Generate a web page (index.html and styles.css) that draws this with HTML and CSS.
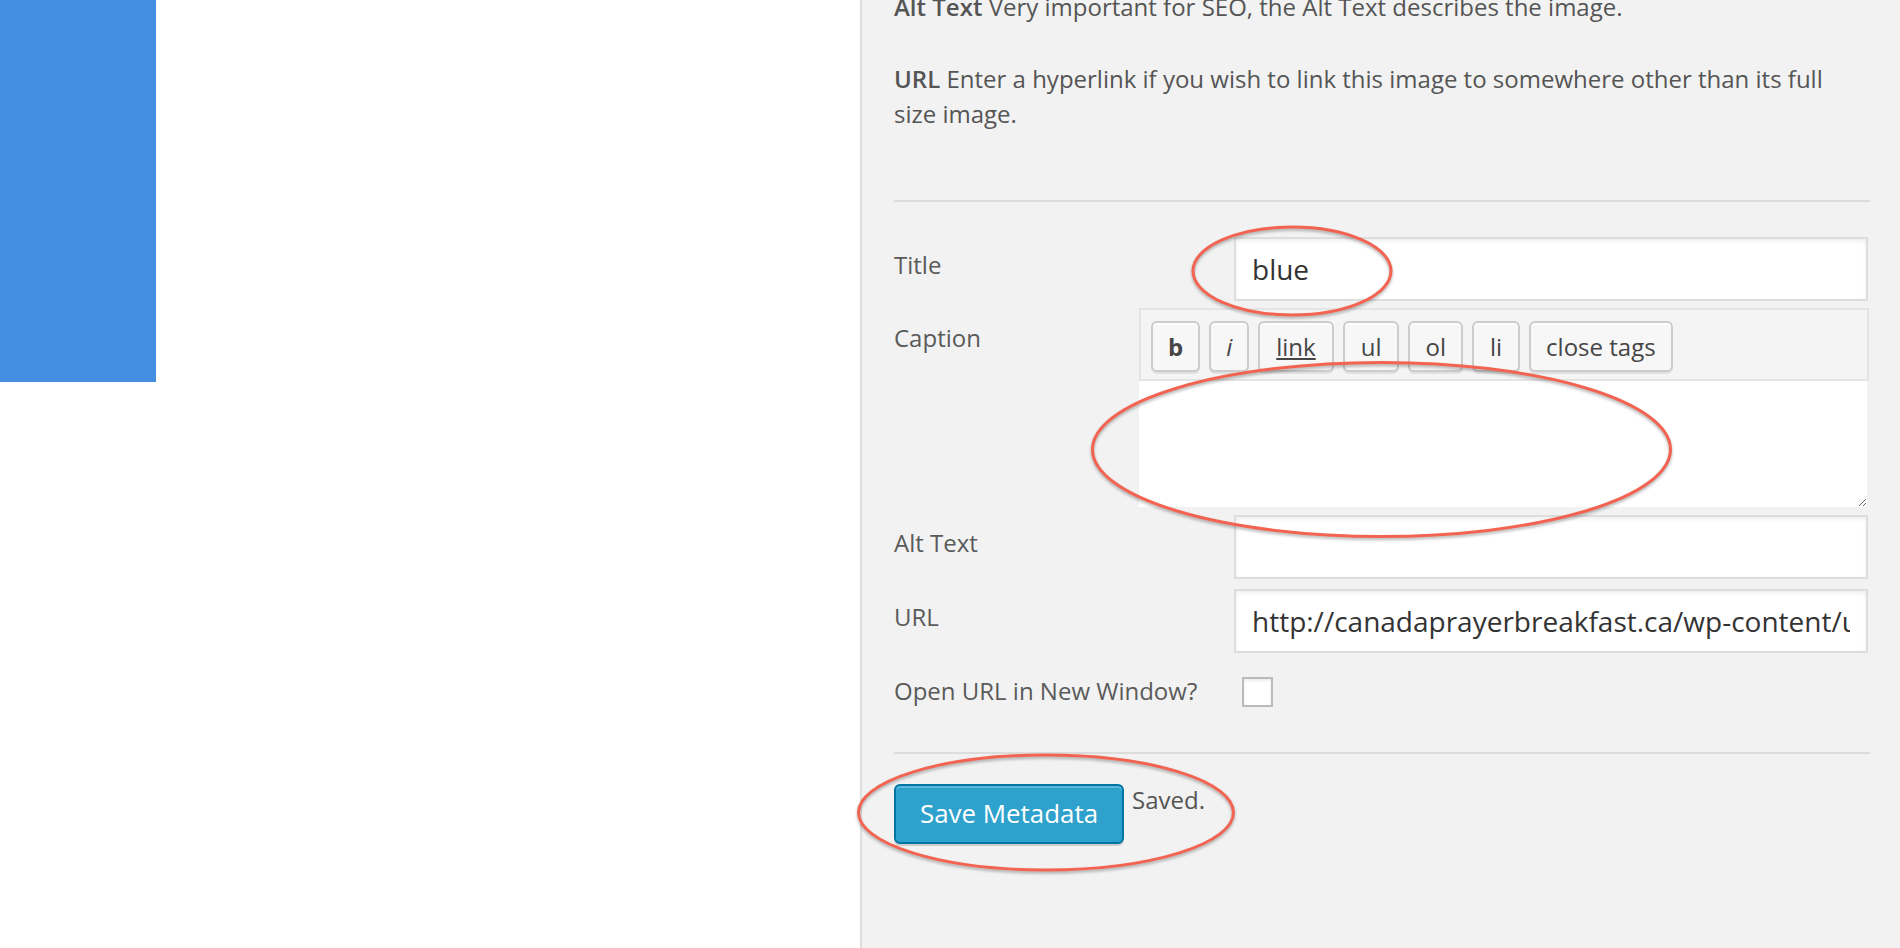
FILE: index.html
```html
<!DOCTYPE html>
<html>
<head>
<meta charset="utf-8">
<link rel="stylesheet" href="styles.css">
</head>
<body>
<div class="page">
  <div class="preview">
    <div class="swatch"></div>
  </div>
  <div class="panel">
    <p class="help first"><strong>Alt Text</strong> Very important for SEO, the Alt Text describes the image.</p>
    <p class="help"><strong>URL</strong> Enter a hyperlink if you wish to link this image to somewhere other than its full size image.</p>
    <div class="rule rule-top"></div>

    <div class="row row-title">
      <label class="lbl">Title</label>
      <input class="field" type="text" value="blue">
    </div>

    <div class="row row-caption">
      <label class="lbl lbl-caption">Caption</label>
      <div class="editor">
        <div class="toolbar">
          <span class="qt qt-b">b</span>
          <span class="qt qt-i">i</span>
          <span class="qt qt-link">link</span>
          <span class="qt">ul</span>
          <span class="qt qt-ol">ol</span>
          <span class="qt qt-li">li</span>
          <span class="qt qt-close">close tags</span>
        </div>
        <textarea class="caption-area"></textarea>
      </div>
    </div>

    <div class="row row-alt">
      <label class="lbl">Alt Text</label>
      <input class="field" type="text" value="">
    </div>

    <div class="row row-url">
      <label class="lbl">URL</label>
      <input class="field" type="text" value="http://canadaprayerbreakfast.ca/wp-content/uploads/2014/blue.png">
    </div>

    <div class="row row-open">
      <label class="lbl lbl-open">Open URL in New Window?</label>
      <input class="check" type="checkbox">
    </div>

    <div class="rule rule-bottom"></div>

    <div class="actions">
      <button class="save">Save Metadata</button>
      <span class="saved">Saved.</span>
    </div>
  </div>
</div>

<svg class="marks" width="1900" height="948" viewBox="0 0 1900 948">
  <ellipse cx="1292" cy="271" rx="99" ry="44"></ellipse>
  <ellipse cx="1381.5" cy="449.5" rx="289" ry="87"></ellipse>
  <ellipse cx="1046" cy="812.5" rx="187.5" ry="57.5"></ellipse>
</svg>
</body>
</html>
```

FILE: styles.css
```css
html, body {
  margin: 0;
  padding: 0;
  height: 100%;
  overflow: hidden;
  background: #ffffff;
}

body {
  font-family: "Open Sans", "Liberation Sans", sans-serif;
  position: relative;
}

.page {
  display: flex;
  height: 948px;
}

.preview {
  width: 860px;
  flex: none;
  background: #ffffff;
}

.swatch {
  width: 156px;
  height: 382px;
  background: #448ee2;
}

.panel {
  flex: 1;
  border-left: 2px solid #dedede;
  background: #f2f2f2;
  padding: 0 30px 0 32px;
  color: #555555;
  font-size: 24px;
  line-height: 35px;
}

.help {
  margin: 0 0 37px 0;
}

.help.first {
  margin-top: -11px;
}

.help strong {
  font-weight: 600;
}

.rule {
  height: 2px;
  background: #dcdcdc;
}

.rule-top {
  margin-top: 69px;
}

.row {
  display: flex;
  align-items: flex-start;
}

.lbl {
  width: 245px;
  flex: none;
  padding-top: 10px;
  color: #5a5a5a;
  white-space: nowrap;
}

.lbl-caption {
  padding-top: 12px;
}

.lbl-open {
  padding-top: 0;
}

.row-title {
  margin-top: 35px;
}

.row-caption {
  margin-top: 7px;
}

.row-alt {
  margin-top: 8px;
}

.row-url {
  margin-top: 10px;
}

.row-open {
  margin-top: 20px;
}

.field {
  flex: 1;
  min-width: 0;
  margin: 0 2px 0 95px;
  height: 64px;
  box-sizing: border-box;
  border: 2px solid #dddddd;
  background: #ffffff;
  box-shadow: inset 0 2px 4px rgba(0, 0, 0, 0.07);
  padding: 0 16px;
  font-family: "Open Sans", "Liberation Sans", sans-serif;
  font-size: 28px;
  color: #333333;
  outline: none;
}

.editor {
  flex: 1;
  display: flex;
  flex-direction: column;
  margin-right: 1px;
}

.toolbar {
  height: 73px;
  box-sizing: border-box;
  border: 2px solid #e4e4e4;
  background: #f4f4f4;
  padding: 11px 10px 0 10px;
  display: flex;
  gap: 9px;
}

.qt {
  height: 51px;
  box-sizing: border-box;
  border: 2px solid #cccccc;
  border-radius: 6px;
  background: #f7f7f7;
  box-shadow: inset 0 2px 0 #ffffff, 0 2px 0 rgba(0, 0, 0, 0.08);
  padding: 0 16px;
  display: flex;
  align-items: center;
  font-size: 24px;
  color: #464646;
}

.qt-b {
  font-weight: 700;
  padding: 0 15px;
}

.qt-i {
  font-style: italic;
  padding: 0 15px;
}

.qt-ol {
  padding: 0 15px;
}

.qt-li {
  padding: 0 16px;
}

.qt-close {
  padding: 0 15px;
}

.qt-link {
  text-decoration: underline;
}

.caption-area {
  display: block;
  height: 126px;
  box-sizing: border-box;
  border: none;
  margin: 0 2px 0 0;
  background: #ffffff;
  resize: vertical;
  outline: none;
  font-family: "Open Sans", "Liberation Sans", sans-serif;
}

.check {
  appearance: none;
  -webkit-appearance: none;
  width: 31px;
  height: 30px;
  box-sizing: border-box;
  margin: 4px 0 0 103px;
  border: 2px solid #bbbbbb;
  background: #ffffff;
  box-shadow: inset 0 2px 3px rgba(0, 0, 0, 0.08);
}

.rule-bottom {
  margin-top: 44px;
}

.actions {
  margin-top: 30px;
  display: flex;
  align-items: flex-start;
  gap: 8px;
}

.save {
  height: 60px;
  box-sizing: border-box;
  padding: 0 24px;
  border: 2px solid #0074a2;
  border-radius: 6px;
  background: #2ea2cc;
  box-shadow: inset 0 2px 0 rgba(120, 200, 230, 0.6), 0 2px 0 rgba(0, 0, 0, 0.15);
  color: #ffffff;
  font-family: "Open Sans", "Liberation Sans", sans-serif;
  font-size: 25.9px;
  line-height: 1;
}

.saved {
  margin-top: -2px;
  color: #555555;
}

.marks {
  position: absolute;
  left: 0;
  top: 0;
  pointer-events: none;
}

.marks ellipse {
  fill: none;
  stroke: #f26451;
  stroke-width: 3;
  filter: drop-shadow(0 2px 1.5px rgba(0, 0, 0, 0.3));
}
```
